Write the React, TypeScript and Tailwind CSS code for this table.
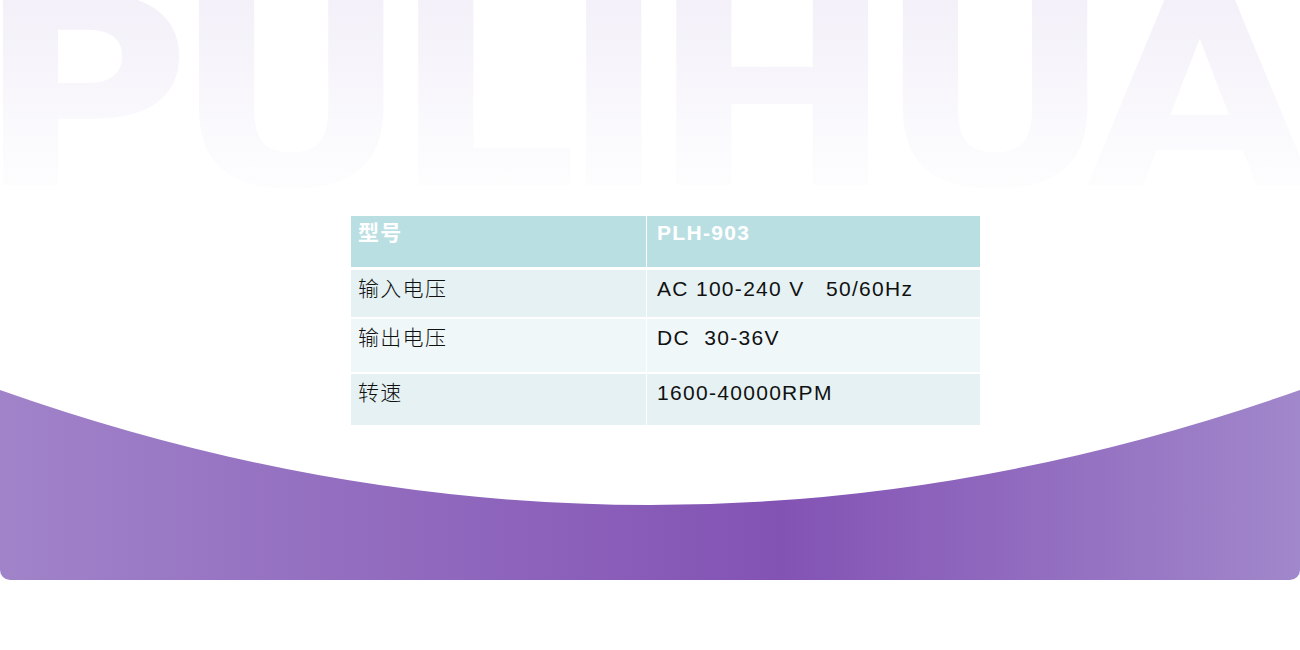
import React from "react";

const rows = [
  { k: "输入电压", v: "AC 100-240 V\u00a0\u00a0\u00a050/60Hz", h: "h-[47px]", bg: "bg-[#e5f1f3]" },
  { k: "输出电压", v: "DC\u00a0\u00a030-36V", h: "h-[53px]", bg: "bg-[#f0f7f9]" },
  { k: "转速", v: "1600-40000RPM", h: "h-[51px]", bg: "bg-[#e5f1f3]" },
];

export default function App() {
  return (
    <div className="w-[1300px] h-[650px] bg-white overflow-hidden font-['Liberation_Sans','Noto_Sans_CJK_SC',sans-serif]">
      <div className="h-[216px] overflow-hidden">
        <div className="mt-[-36px] ml-[-24px] origin-left scale-x-[1.12] tracking-[-17px] whitespace-nowrap text-[262px] leading-none font-bold font-['DejaVu_Sans',sans-serif] bg-[linear-gradient(to_bottom,#f3f0f9_12%,#fdfdfe_85%)] bg-clip-text text-transparent select-none">
          PULIHUA
        </div>
      </div>
      <div className="relative z-10 flex pl-[351px]">
        <div className="w-[629px] flex flex-col bg-white tracking-[1.3px] text-[21px] text-[#111]">
          <div className="flex h-[51px] bg-white gap-px">
            <div className="w-[295px] bg-[#badfe3] pl-[7px] pt-[2px] leading-[30px] font-bold text-white">型号</div>
            <div className="flex-1 bg-[#badfe3] pl-[10px] pt-[2px] leading-[30px] font-bold text-white">PLH-903</div>
          </div>
          {rows.map((r, i) => (
            <div key={i} className={`flex gap-px ${r.h} ${i === 0 ? "mt-[3px]" : "mt-[2px]"}`}>
              <div className={`w-[295px] ${r.bg} pl-[7px] pt-[4px] leading-[30px] font-light`}>{r.k}</div>
              <div className={`flex-1 ${r.bg} pl-[10px] pt-[4px] leading-[30px]`}>{r.v}</div>
            </div>
          ))}
        </div>
      </div>
      <div className="relative mt-[-35px] h-[190px] rounded-b-[10px] bg-[linear-gradient(to_right,#a083c9_0%,#8353b4_60%,#a187cb_100%)]">
        <svg className="absolute top-0 left-0" width="1300" height="120" viewBox="0 0 1300 120">
          <path d="M0 0 L1300 0 Q650 230 0 0 Z" fill="#ffffff" />
        </svg>
      </div>
    </div>
  );
}
